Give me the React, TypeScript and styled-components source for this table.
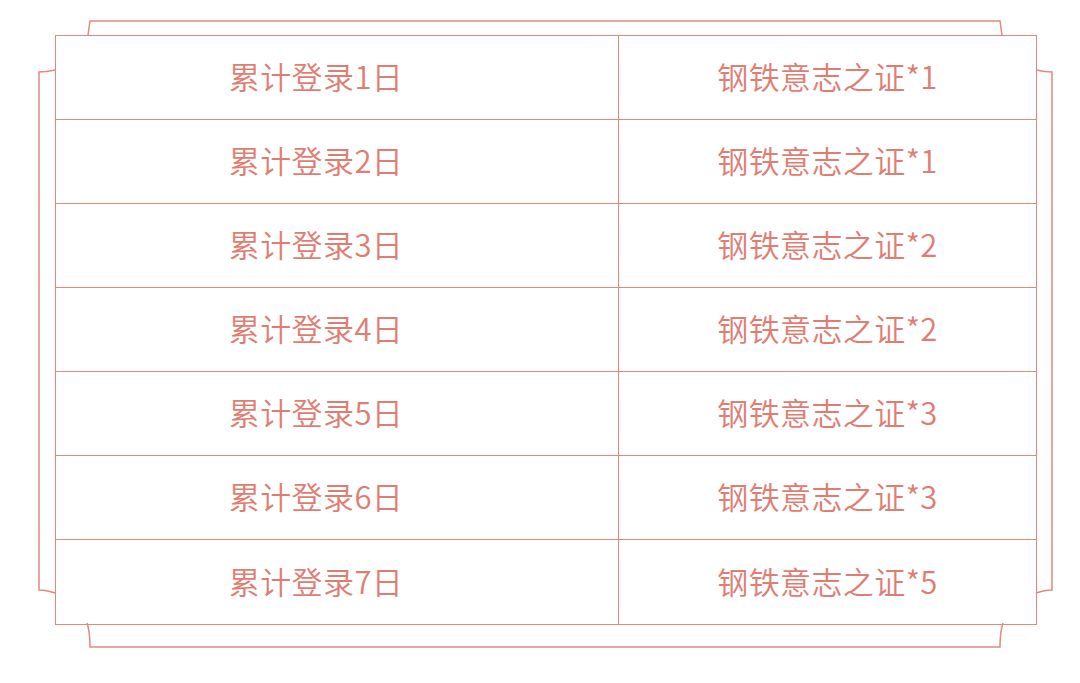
import React from 'react';
import styled, { createGlobalStyle } from 'styled-components';

const GlobalStyle = createGlobalStyle`
  html, body { margin: 0; padding: 0; background: #ffffff; }
  body { font-family: "Noto Sans CJK SC", "Noto Sans", sans-serif; }
`;

const LINE = '#e6877e';
const TEXT = '#e07d73';

const rows: [string, string][] = [
  ['累计登录1日', '钢铁意志之证*1'],
  ['累计登录2日', '钢铁意志之证*1'],
  ['累计登录3日', '钢铁意志之证*2'],
  ['累计登录4日', '钢铁意志之证*2'],
  ['累计登录5日', '钢铁意志之证*3'],
  ['累计登录6日', '钢铁意志之证*3'],
  ['累计登录7日', '钢铁意志之证*5'],
];

const Page = styled.div`
  width: 1080px;
  height: 683px;
  padding: 35px 0 0 55px;
  box-sizing: border-box;
`;

const Frame = styled.div`
  position: relative;
  width: 982px;
`;

const Decor = styled.svg`
  position: absolute;
  left: -55px;
  top: -35px;
  width: 1080px;
  height: 683px;
  pointer-events: none;
`;

const Table = styled.div`
  display: grid;
  grid-template-columns: 563px 1fr;
  border: 1.5px solid ${LINE};
  box-sizing: border-box;
  background: #fff;
`;

const Cell = styled.div<{ $left?: boolean; $last?: boolean }>`
  height: 84px;
  display: flex;
  align-items: center;
  justify-content: center;
  padding-right: ${p => (p.$left ? '42px' : '0')};
  padding-bottom: 4px;
  box-sizing: border-box;
  border-bottom: ${p => (p.$last ? 'none' : `1.5px solid ${LINE}`)};
  border-right: ${p => (p.$left ? `1.5px solid ${LINE}` : 'none')};
  color: ${TEXT};
  font-size: 31px;
  font-weight: 350;
  letter-spacing: 0.4px;
`;

const App: React.FC = () => {
  return (
    <>
      <GlobalStyle />
      <Page>
        <Frame>
          <Decor viewBox="0 0 1080 683">
            <g fill="none" stroke={LINE} strokeWidth="1.5">
              <path d="M88 35 L90 21 L1000 21 L1002 35" />
              <path d="M55 70 Q46 72 39 72 L39 590 Q46 590 55 593" />
              <path d="M1036 70 Q1045 72 1052 72 L1052 590 Q1045 590 1036 593" />
              <path d="M87 623 Q90 632 90 647 L1000 647 Q1000 632 1003 623" />
            </g>
          </Decor>
          <Table>
            {rows.map(([day, reward], i) => (
              <React.Fragment key={day}>
                <Cell $left $last={i === rows.length - 1}>{day}</Cell>
                <Cell $last={i === rows.length - 1}>{reward}</Cell>
              </React.Fragment>
            ))}
          </Table>
        </Frame>
      </Page>
    </>
  );
};

export default App;
